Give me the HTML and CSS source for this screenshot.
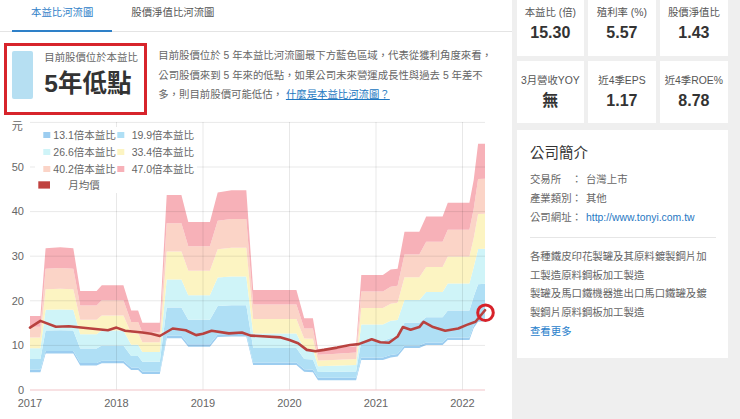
FILE: index.html
```html
<!DOCTYPE html>
<html lang="zh-Hant">
<head>
<meta charset="utf-8">
<title>本益比河流圖</title>
<link rel="stylesheet" href="styles.css">
</head>
<body>
<div class="page">
  <main class="left">
    <nav class="tabs">
      <a class="tab active">本益比河流圖</a>
      <a class="tab">股價淨值比河流圖</a>
    </nav>
    <section class="summary">
      <div class="badge">
        <div class="swatch"></div>
        <div class="badge-text">
          <div class="badge-label">目前股價位於本益比</div>
          <div class="badge-value">5年低點</div>
        </div>
      </div>
      <p class="desc">目前股價位於 5 年本益比河流圖最下方藍色區域，代表從獲利角度來看，<br>公司股價來到 5 年來的低點，如果公司未來營運成長性與過去 5 年差不<br>多，則目前股價可能低估， <a class="link">什麼是本益比河流圖？</a></p>
    </section>
    <div class="chart">
      <svg id="chart" class="chart-svg" width="512" height="301" viewBox="0 118 512 301"></svg>
    </div>
  </main>
  <aside class="right">
    <div class="stats">
      <div class="stat"><div class="stat-label">本益比 (倍)</div><div class="stat-value">15.30</div></div>
      <div class="stat"><div class="stat-label">殖利率 (%)</div><div class="stat-value">5.57</div></div>
      <div class="stat"><div class="stat-label">股價淨值比</div><div class="stat-value">1.43</div></div>
      <div class="stat"><div class="stat-label">3月營收YOY</div><div class="stat-value">無</div></div>
      <div class="stat"><div class="stat-label">近4季EPS</div><div class="stat-value">1.17</div></div>
      <div class="stat"><div class="stat-label">近4季ROE%</div><div class="stat-value">8.78</div></div>
    </div>
    <div class="profile">
      <div class="profile-title">公司簡介</div>
      <div class="info">
        <div class="info-row"><span class="k">交易所</span><span class="c">：</span><span class="v">台灣上市</span></div>
        <div class="info-row"><span class="k">產業類別</span><span class="c">：</span><span class="v">其他</span></div>
        <div class="info-row"><span class="k">公司網址</span><span class="c">：</span><span class="v url">http://www.tonyi.com.tw</span></div>
      </div>
      <div class="sep"></div>
      <div class="about">
        <div>各種鐵皮印花製罐及其原料鍍製鋼片加工製造原料鋼板加工製造</div>
        <div>製罐及馬口鐵機器進出口馬口鐵罐及鍍製鋼片原料鋼板加工製造</div>
      </div>
      <a class="more">查看更多</a>
    </div>
  </aside>
</div>
<script src="chart.js"></script>
</body>
</html>
```

FILE: styles.css
```css
* { box-sizing: border-box; margin: 0; padding: 0; }
html, body { width: 740px; height: 419px; overflow: hidden; background: #fff; }
body { font-family: "Liberation Sans", "Noto Sans CJK TC", sans-serif; color: #555; }
a { text-decoration: none; }

.page { display: flex; width: 740px; height: 419px; }

.left { width: 512px; flex: none; display: flex; flex-direction: column; background: #fff; }

.tabs { display: flex; height: 32px; border-bottom: 1px solid #e4e4e4; padding-left: 12px; }
.tab { padding: 6px 19px 0; font-size: 10.4px; line-height: 14px; color: #555; }
.tab.active { color: #2e80c8; border-bottom: 2.5px solid #2e80c8; margin-bottom: -1px; }

.summary { display: flex; align-items: flex-start; margin-top: 11px; padding-left: 4px; height: 75px; }
.badge { width: 143px; height: 72px; flex: none; border: 3px solid #d7242b; display: flex; align-items: flex-start; padding: 4.7px 0 0 4.7px; }
.swatch { width: 21.6px; height: 48.3px; background: #b6dff2; border-radius: 2px; flex: none; }
.badge-text { margin-left: 11px; }
.badge-label { font-size: 10.4px; line-height: 14px; margin-top: 0.6px; color: #666; white-space: nowrap; }
.badge-value { font-size: 24.5px; line-height: 28px; margin-top: 4.5px; font-weight: bold; color: #333; white-space: nowrap; }
.desc { margin-left: 11.3px; margin-top: 3.4px; font-size: 10.4px; line-height: 19.2px; color: #666; white-space: nowrap; }
.link { color: #2176c0; text-decoration: underline; }

.chart { height: 301px; }
.chart-svg { display: block; }
.chart-svg text { font-family: "Liberation Sans", "Noto Sans CJK TC", sans-serif; fill: #666; }
.chart-svg .axis { font-size: 11px; }
.chart-svg .leg { font-size: 10.5px; fill: #666; }

.right { flex: 1; background: #efefef; padding: 0 12px 0 4.7px; }
.stats { display: grid; grid-template-columns: 67.3px 67.3px 68px; column-gap: 4.3px; row-gap: 5px; margin-top: -7px; }
.stat { background: #fff; height: 62.5px; text-align: center; padding-top: 13px; }
.stat-label { font-size: 10.4px; line-height: 14px; color: #555; white-space: nowrap; }
.stat-value { font-size: 16px; line-height: 20px; margin-top: 3px; font-weight: bold; color: #333; }

.profile { margin-top: 7px; height: 228px; background: #fff; padding: 12.7px 12px 0 13.3px; }
.profile-title { font-size: 14.5px; line-height: 20px; color: #333; }
.info { margin-top: 8.6px; font-size: 10.4px; line-height: 18.8px; color: #666; }
.info-row { white-space: nowrap; }
.info-row .k { display: inline-block; width: 41.6px; }
.info-row .v { margin-left: 4px; }
.info-row .url { color: #1f77c3; }
.sep { height: 1px; background: #e6e6e6; margin-top: 9.5px; }
.about { margin-top: 9.7px; font-size: 10.4px; line-height: 18.7px; color: #666; width: 180px; }
.more { display: block; color: #2b82cc; font-size: 10.4px; line-height: 18.7px; }
```

FILE: chart.js
```js
(function () {
  var svg = document.getElementById('chart');
  var NS = 'http://www.w3.org/2000/svg';
  function X(t) { return 30 + (t - 2017) * 86.5; }
  function Y(v) { return 390 - v * 4.46; }
  function el(name, attrs, text) {
    var e = document.createElementNS(NS, name);
    for (var k in attrs) e.setAttribute(k, attrs[k]);
    if (text != null) e.textContent = text;
    svg.appendChild(e);
    return e;
  }

  // [year, top (47x), bottom (13.1x)]
  var river = [
    [2017.00, 16.6, 4.0], [2017.12, 16.6, 4.0], [2017.18, 31.8, 8.2], [2017.35, 32.0, 8.2],
    [2017.50, 31.8, 8.2], [2017.58, 22.2, 5.5], [2017.77, 22.2, 5.5], [2017.83, 23.5, 6.0],
    [2018.08, 23.5, 6.0], [2018.17, 17.8, 4.5], [2018.25, 17.8, 4.5], [2018.30, 15.1, 3.6],
    [2018.50, 15.1, 3.6], [2018.58, 43.7, 11.6], [2018.75, 43.7, 11.6], [2018.83, 37.7, 9.7],
    [2019.08, 37.7, 9.7], [2019.17, 44.3, 11.9], [2019.33, 44.8, 12.0], [2019.50, 44.8, 12.0],
    [2019.58, 22.4, 5.6], [2020.08, 22.4, 5.6], [2020.17, 16.1, 4.1], [2020.27, 16.1, 4.0],
    [2020.33, 9.2, 2.2], [2020.50, 9.4, 2.2], [2020.77, 9.8, 2.2], [2020.83, 25.8, 6.7],
    [2021.08, 25.8, 6.7], [2021.17, 27.0, 7.3], [2021.25, 27.2, 7.5], [2021.33, 35.5, 9.4],
    [2021.50, 35.5, 9.4], [2021.58, 38.9, 10.1], [2021.77, 38.9, 10.1], [2021.83, 42.0, 11.2],
    [2022.08, 42.0, 11.2], [2022.13, 47.1, 13.9], [2022.18, 55.2, 15.3], [2022.26, 55.2, 15.4]
  ];
  var price = [
    [2017.00, 14.0], [2017.12, 15.5], [2017.30, 14.2], [2017.45, 14.3], [2017.70, 13.8],
    [2017.90, 13.4], [2018.00, 14.0], [2018.10, 13.3], [2018.30, 12.9], [2018.40, 12.6],
    [2018.50, 12.1], [2018.65, 13.8], [2018.80, 13.4], [2018.92, 12.3], [2019.00, 12.6],
    [2019.10, 13.3], [2019.30, 12.7], [2019.45, 12.9], [2019.55, 12.2], [2019.90, 11.8],
    [2020.00, 11.2], [2020.10, 10.5], [2020.20, 9.0], [2020.30, 8.7], [2020.40, 9.0],
    [2020.55, 9.5], [2020.70, 10.1], [2020.80, 10.3], [2020.95, 11.4], [2021.05, 10.7],
    [2021.15, 10.6], [2021.25, 12.0], [2021.31, 14.1], [2021.40, 13.5], [2021.50, 14.1],
    [2021.55, 15.3], [2021.65, 14.2], [2021.80, 13.3], [2021.95, 13.8], [2022.05, 14.6],
    [2022.15, 15.3], [2022.26, 17.9]
  ];
  var colors = ['#9ccdf0', '#afdff5', '#cff4f8', '#fcf4c2', '#fbd4c7', '#f7b1b8'];

  var bounds = river.map(function (r) {
    var x = X(r[0]), yb = Y(r[2]), yt = Y(r[1]), ys = yb - 2.5;
    var arr = [yb, ys];
    for (var k = 1; k <= 5; k++) arr.push(ys + (yt - ys) * k / 5);
    return { x: x, arr: arr };
  });
  for (var i = 0; i < 6; i++) {
    var upper = bounds.map(function (b) { return b.x.toFixed(1) + ',' + b.arr[i + 1].toFixed(1); });
    var lower = bounds.map(function (b) { return b.x.toFixed(1) + ',' + b.arr[i].toFixed(1); }).reverse();
    el('polygon', { points: upper.concat(lower).join(' '), fill: colors[i] });
  }

  // grid
  for (var v = 10; v <= 60; v += 10) {
    el('line', { x1: 30, x2: 485, y1: Y(v), y2: Y(v), stroke: 'rgba(0,0,0,0.09)', 'stroke-width': 1 });
  }
  for (var yr = 2018; yr <= 2022; yr++) {
    el('line', { x1: X(yr), x2: X(yr), y1: 122, y2: 390, stroke: 'rgba(0,0,0,0.09)', 'stroke-width': 1 });
  }
  el('line', { x1: 30, x2: 485, y1: 390, y2: 390, stroke: '#f1c3c7', 'stroke-width': 1.2 });

  // axis labels
  for (var v2 = 0; v2 <= 50; v2 += 10) {
    el('text', { x: 24, y: Y(v2) + 3.8, 'text-anchor': 'end', 'class': 'axis' }, String(v2));
  }
  el('text', { x: 17.3, y: 130, 'text-anchor': 'middle', 'class': 'axis' }, '元');
  for (var y2 = 2017; y2 <= 2022; y2++) {
    el('text', { x: X(y2), y: 406.6, 'text-anchor': 'middle', 'class': 'axis' }, String(y2));
  }

  // price line
  el('polyline', {
    points: price.map(function (p) { return X(p[0]).toFixed(1) + ',' + Y(p[1]).toFixed(1); }).join(' '),
    fill: 'none', stroke: '#b8423f', 'stroke-width': 2.6, 'stroke-linejoin': 'round', 'stroke-linecap': 'round'
  });

  // highlight circle
  el('circle', { cx: 485.5, cy: 312.7, r: 7.8, fill: 'none', stroke: '#d7222a', 'stroke-width': 3 });

  // legend
  el('rect', { x: 35, y: 127, width: 162, height: 66, fill: '#fff' });
  var legend = [
    [43.3, 135, colors[0], '13.1倍本益比', 53.3], [117.3, 135, colors[1], '19.9倍本益比', 131.7],
    [43.3, 152, colors[2], '26.6倍本益比', 53.3], [117.3, 152, colors[3], '33.4倍本益比', 131.7],
    [43.3, 169, colors[4], '40.2倍本益比', 53.3], [117.3, 169, colors[5], '47.0倍本益比', 131.7]
  ];
  legend.forEach(function (l) {
    el('rect', { x: l[0], y: l[1] - 3, width: 7, height: 6, fill: l[2] });
    el('text', { x: l[4], y: l[1] + 3.8, 'class': 'leg' }, l[3]);
  });
  el('rect', { x: 38.3, y: 181.3, width: 11.7, height: 7.3, fill: '#c0423f' });
  el('text', { x: 68.3, y: 188.8, 'class': 'leg' }, '月均價');
})();
```
